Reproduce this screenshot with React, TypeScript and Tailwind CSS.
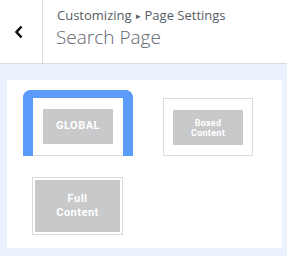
import React from 'react';

function Layout(props: { label: React.ReactNode; className?: string; textClass?: string }) {
  const { label, className, textClass } = props;
  return (
    <div className={`w-[90px] h-[58px] border border-[#dcdcdc] bg-white ${className || ''}`}>
      <div
        className={`flex items-center justify-center text-center bg-[#c8c9cb] text-white font-bold font-['Roboto',sans-serif] ${textClass || ''}`}>
        {label}
      </div>
    </div>
  );
}

export default function App() {
  return (
    <div className="w-[287px] h-[256px] flex flex-col bg-[#eaf2fd] font-['Open_Sans',sans-serif]">
      <div className="h-16 flex bg-white border-b border-[#dcdcdc]">
        <button className="w-[43px] flex items-center pl-[14px] border-r border-[#dcdcdc]">
          <svg width="10" height="14" viewBox="0 0 10 14" fill="none">
            <path d="M7.5 1.5 L2.5 7 L7.5 12.5" stroke="#111" strokeWidth="2.6" />
          </svg>
        </button>
        <div className="pl-[14px] pt-[6px] flex flex-col">
          <span className="text-[13px] leading-[18px] text-[#555d66] flex items-center">
            Customizing
            <span className="text-[9px] mx-[4px] leading-none">▸</span>
            Page Settings
          </span>
          <span className="text-[19px] leading-[26px] font-light text-[#5f666e] -ml-px">Search Page</span>
        </div>
      </div>
      <div className="flex-1 pt-4 pl-[7px] pr-[5px] pb-2">
        <div className="h-full bg-white pl-4 pt-[10px]">
          <div className="flex items-end gap-[30px]">
            <div className="border-[#5b9cfa] border-x-[10px] border-t-[8px] rounded-t-[8px]">
              <Layout
                className="border-0 border-b w-[90px] h-[57px] pt-[11px] px-[10px]"
                textClass="h-[35px] text-[11px] tracking-[0.5px]"
                label="GLOBAL"
              />
            </div>
            <Layout
              className="pt-[11px] px-[9px]"
              textClass="h-[35px] text-[9px] leading-[10px] tracking-[0.3px]"
              label={
                <span>
                  Boxed
                  <br />
                  Content
                </span>
              }
            />
          </div>
          <div className="mt-[21px] ml-[9px]">
            <Layout
              className="w-[91px] p-[2px]"
              textClass="h-full text-[11px] leading-[14px] tracking-[0.5px]"
              label={
                <span>
                  Full
                  <br />
                  Content
                </span>
              }
            />
          </div>
        </div>
      </div>
    </div>
  );
}
